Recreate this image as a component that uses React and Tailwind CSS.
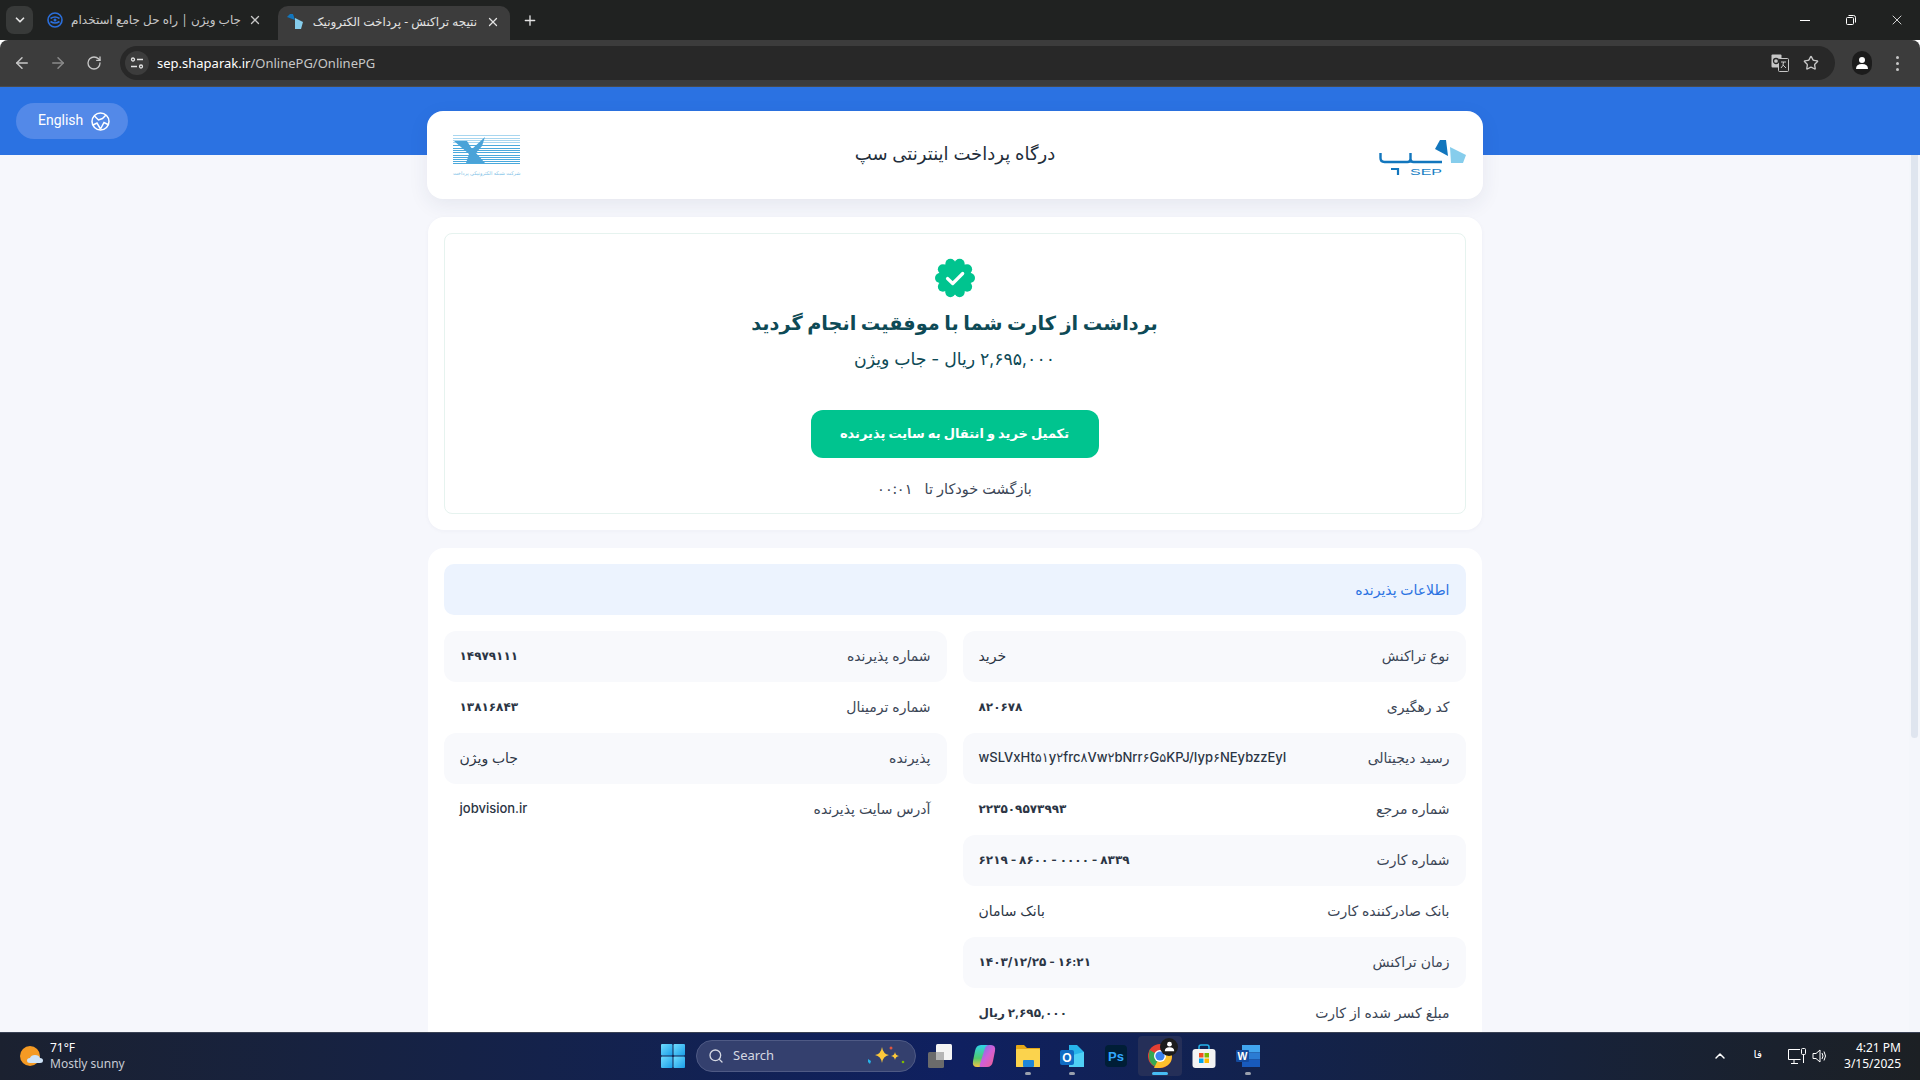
// App.jsx
// Saman (SEP) payment result page inside a Chrome window with the Windows 11 taskbar.

import { ArrowLeft, ArrowRight, ChevronDown, ChevronUp, Plus, RotateCw, Search, Star, X } from "lucide-react";

// Row shape: [label, value, kind]; kind is "num" for digit values, "ltr" for left-to-right mixed text.
const RIGHT_ROWS = [
  ["نوع تراکنش", "خرید"],
  ["کد رهگیری", "۸۲۰۶۷۸", "num"],
  ["رسید دیجیتالی", "wSLVxHt۵۱y۲frc۸Vw۲bNrr۶G۵KPJ/Iyp۶NEybzzEyI", "ltr"],
  ["شماره مرجع", "۲۲۳۵۰۹۵۷۳۹۹۳", "num"],
  ["شماره کارت", "۶۲۱۹ - ۸۶۰۰ - ۰۰۰۰ - ۸۳۳۹", "num"],
  ["بانک صادرکننده کارت", "بانک سامان"],
  ["زمان تراکنش", "۱۴۰۳/۱۲/۲۵ - ۱۶:۲۱", "num"],
  ["مبلغ کسر شده از کارت", "۲,۶۹۵,۰۰۰ ریال", "amount"],
];

const LEFT_ROWS = [
  ["شماره پذیرنده", "۱۴۹۷۹۱۱۱", "num"],
  ["شماره ترمینال", "۱۳۸۱۶۸۴۳", "num"],
  ["پذیرنده", "جاب ویژن"],
  ["آدرس سایت پذیرنده", "jobvision.ir", "ltr"],
];

const VALUE_CLASS = {
  num: "text-[12px] font-bold",
  ltr: "text-[13px] font-medium",
  amount: "text-[12px] font-bold",
};

function InfoRows({ rows }) {
  return (
    <div className="flex flex-col">
      {rows.map(([label, value, kind], i) => (
        <div
          key={label}
          className={`flex h-[51px] shrink-0 items-center justify-between rounded-xl px-4 pb-[2px] text-[14px] ${
            i % 2 === 0 ? "bg-[#f8f9fc]" : "bg-white"
          }`}
        >
          <span className="text-[#3b4656]">{label}</span>
          <span
            dir={kind === "amount" || !kind ? undefined : "ltr"}
            className={`text-[#2b3544] ${VALUE_CLASS[kind] || "font-medium"}`}
          >
            {value}
          </span>
        </div>
      ))}
    </div>
  );
}

function SepLogo() {
  return (
    <svg className="mt-[5px]" width="88" height="36" viewBox="0 0 88 36">
      <path d="M1.500 13v5q0 4 4 4h23q3 0 3-3v-6M31.500 19q0 3 3 3h28.500" fill="none" stroke="#1276bd" strokeWidth="2.400" />
      <path d="M12 29h7v6" fill="none" stroke="#1276bd" strokeWidth="2.200" />
      <path d="M56 9l5-9h6l2 16z" fill="#1276bd" />
      <path d="M71 7l16 8-3 8H72z" fill="#86cdec" />
      <text
        x="31"
        y="34.500"
        direction="ltr"
        textLength="32"
        lengthAdjust="spacingAndGlyphs"
        fontFamily="Liberation Sans, sans-serif"
        fontSize="9"
        fill="#1a7fc4"
      >
        SEP
      </text>
    </svg>
  );
}

function BankLogo() {
  const lines = [0, 3, 5, 7, 10, 13, 15, 17, 20, 22, 24, 26, 28];
  return (
    <div className="mt-[3px] flex w-[67px] flex-col items-stretch">
      <svg width="67" height="31" viewBox="0 0 67 31">
        {lines.map((y, i) => (
          <rect key={y} x="0" y={y} width="67" height="1" fill={i < 4 ? "#a8d6ef" : "#4aa9dc"} />
        ))}
        <path d="M1 6h13l5 8L32 2l-3 9-6 7 9 10H13l3-9z" fill="#4aa3d8" />
      </svg>
      <span className="mt-[2px] text-center text-[5px] leading-[10px] whitespace-nowrap text-[#7cc0e6]" dir="rtl">
        شرکت شبکه الکترونیکی پرداخت
      </span>
    </div>
  );
}

function SuccessBadge() {
  const lobes = [0, 36, 72, 108, 144, 180, 216, 252, 288, 324];
  return (
    <svg width="40" height="40" viewBox="0 0 40 40">
      {lobes.map((a) => (
        <circle
          key={a}
          cx={20 + 15 * Math.cos((a * Math.PI) / 180)}
          cy={20 + 15 * Math.sin((a * Math.PI) / 180)}
          r="5"
          fill="#00c48f"
        />
      ))}
      <circle cx="20" cy="20" r="16.500" fill="#00c48f" />
      <path d="M12.500 20.500l5.200 5 10-10" fill="none" stroke="white" strokeWidth="3.200" strokeLinecap="round" strokeLinejoin="round" />
    </svg>
  );
}

function LangIcon() {
  return (
    <svg width="19" height="19" viewBox="0 0 19 19" fill="none" stroke="white" strokeWidth="1.500">
      <circle cx="9.500" cy="9.500" r="8.500" />
      <path d="M3.500 4l4 4 4-1.500L15 3M2 13l4-2 3.500 6M17 12.500l-4-2-3.500 6.500" />
    </svg>
  );
}

function JobVisionFavicon() {
  return (
    <svg width="16" height="16" viewBox="0 0 16 16" fill="none" stroke="#2b6fdc" strokeWidth="1.600">
      <circle cx="8" cy="8" r="7" />
      <path d="M3.500 6.500q4.500-3 9 0M3.500 9.500q4.500 3 9 0" />
      <circle cx="8" cy="8" r="1.500" fill="#2b6fdc" stroke="none" />
    </svg>
  );
}

function SepFavicon() {
  return (
    <svg width="16" height="16" viewBox="0 0 16 16">
      <path d="M0 3l3-3h3l2 6z" fill="#1276bd" />
      <path d="M8 4l8 4-2 7H8z" fill="#86cdec" />
    </svg>
  );
}

function ChromeTabs() {
  return (
    <div className="flex h-10 shrink-0 items-end bg-[#202221] pl-[6px] text-[12px] font-[Noto_Sans,'DejaVu_Sans',sans-serif]">
      <div className="mb-[6px] flex h-7 w-[27px] items-center justify-center rounded-lg bg-[#383a39]">
        <ChevronDown size={14} strokeWidth={3} className="text-[#e3e3e3]" />
      </div>
      <div className="mb-[6px] flex h-7 w-[245px] items-center pl-[14px]">
        <JobVisionFavicon />
        <span dir="rtl" className="ml-[6px] w-[172px] text-right whitespace-nowrap text-[#c7c7c7]">
          جاب ویژن | راه حل جامع استخدام
        </span>
        <X size={14} strokeWidth={2.200} className="ml-[7px] text-[#c7c7c7]" />
      </div>
      <div className="flex h-[34px] w-[232px] items-center rounded-t-[10px] bg-[#3c3c3c] pb-[2px] pl-[9px]">
        <SepFavicon />
        <span dir="rtl" className="ml-[5px] w-[169px] text-right whitespace-nowrap text-[#e3e3e3]">
          نتیجه تراکنش - پرداخت الکترونیک
        </span>
        <X size={14} strokeWidth={2.200} className="ml-[9px] text-[#e3e3e3]" />
      </div>
      <div className="mb-[6px] ml-[12px] flex h-7 w-[16px] items-center justify-center">
        <Plus size={17} className="text-[#e3e3e3]" />
      </div>
      <div className="mb-[6px] ml-auto flex h-7 items-center text-white">
        <div className="flex w-[46px] justify-center">
          <div className="h-px w-[10px] bg-white" />
        </div>
        <div className="flex w-[46px] justify-center">
          <svg width="10" height="10" viewBox="0 0 10 10" fill="none" stroke="white">
            <rect x="0.500" y="2.500" width="7" height="7" rx="1" />
            <path d="M2.500 0.500h5q2 0 2 2v5" />
          </svg>
        </div>
        <div className="flex w-[46px] justify-center">
          <X size={16} strokeWidth={1.200} />
        </div>
      </div>
    </div>
  );
}

function ChromeToolbar() {
  return (
    <div className="flex h-[47px] shrink-0 items-center rounded-t-[8px] border-b border-[#4a4a4a] bg-[#3c3c3c] pl-[12px] text-[#c7c7c7]">
      <div className="flex w-[108px] items-center">
        <ArrowLeft size={18} className="ml-px" />
        <ArrowRight size={18} className="ml-[18px] text-[#8a8a8a]" />
        <RotateCw size={16} className="ml-[19px]" />
      </div>
      <div className="flex h-[34px] w-[1715px] items-center rounded-full bg-[#282828] pl-[5px]">
        <div className="flex h-6 w-6 items-center justify-center rounded-full bg-[#3c3c3c]">
          <svg width="14" height="14" viewBox="0 0 14 14" fill="none" stroke="#e3e3e3" strokeWidth="1.300">
            <circle cx="3" cy="3.500" r="1.500" />
            <path d="M7 3.500h6M1 10.500h6" />
            <circle cx="11" cy="10.500" r="1.500" />
          </svg>
        </div>
        <span className="ml-[8px] pt-px font-[Noto_Sans,sans-serif] text-[13px] text-[#c7c7c7]">
          <span className="text-white">sep.shaparak.ir</span>/OnlinePG/OnlinePG
        </span>
        <div className="ml-auto flex items-center pr-[16px]">
          <svg width="18" height="18" viewBox="0 0 18 18">
            <rect x="0.500" y="0.500" width="10" height="13" rx="1" fill="#c7c7c7" />
            <rect x="7.500" y="4.500" width="10" height="13" rx="1" fill="#282828" stroke="#c7c7c7" />
            <path d="M10 8h5M12.500 8q0 4-2.500 6M12 11l3 3" stroke="#c7c7c7" fill="none" />
            <circle cx="5" cy="7" r="2.500" fill="none" stroke="#282828" strokeWidth="1.300" />
          </svg>
          <Star size={16} className="ml-[14px]" />
        </div>
      </div>
      <div className="ml-[17px] flex h-6 w-[20px] items-center justify-center rounded-full bg-[#1c1c1c]">
        <svg width="14" height="14" viewBox="0 0 14 14" fill="white">
          <circle cx="7" cy="4" r="3" />
          <path d="M1 13q0-5 6-5t6 5z" />
        </svg>
      </div>
      <div className="ml-[24px] flex flex-col gap-[3px]">
        <div className="h-[3px] w-[3px] rounded-full bg-[#c7c7c7]" />
        <div className="h-[3px] w-[3px] rounded-full bg-[#c7c7c7]" />
        <div className="h-[3px] w-[3px] rounded-full bg-[#c7c7c7]" />
      </div>
    </div>
  );
}

function Scrollbar() {
  return (
    <div className="flex w-[11px] shrink-0 flex-col items-center bg-[#f4f6fb] pt-[3px]">
      <div className="h-0 w-0 border-x-[4px] border-b-[5px] border-x-transparent border-b-[#d5dbe6]" />
      <div className="mt-[3px] h-[640px] w-[7px] rounded-full bg-[#dfe5ef]" />
    </div>
  );
}

function ResultPage() {
  return (
    <div className="relative flex min-h-0 flex-1 overflow-hidden bg-[#f6f7fc]">
      <div className="absolute inset-x-0 top-0 h-[68px] bg-[#2b72e2]" />
      <div className="absolute left-[16px] top-[16px] flex h-9 w-[112px] items-center gap-[8px] rounded-full bg-[#5389e8] pl-[22px] font-[Roboto,sans-serif] text-[14px] text-white">
        <span className="pb-[2px]">English</span>
        <LangIcon />
      </div>
      <div dir="rtl" className="relative mx-auto w-[1056px] shrink-0 pt-[24px]">
        <header className="flex h-[88px] items-center rounded-2xl bg-white px-4 shadow-[0_6px_20px_rgba(40,50,90,0.08)]">
          <div className="flex flex-1 justify-start">
            <SepLogo />
          </div>
          <h1 className="mr-[10px] pb-[3px] text-[18px] font-medium text-[#222d3a]">درگاه پرداخت اینترنتی سپ</h1>
          <div className="flex flex-1 justify-end pl-[11px]">
            <BankLogo />
          </div>
        </header>

        <section className="mx-px mt-[18px] rounded-2xl bg-white p-4 shadow-[0_1px_4px_rgba(40,50,90,0.04)]">
          <div className="flex h-[281px] flex-col items-center rounded-lg border border-[#e6f3ef] pt-[24px]">
            <SuccessBadge />
            <h2 className="mt-[9px] text-[19.300px] leading-8 font-bold text-[#0e4a56]">
              برداشت از کارت شما با موفقیت انجام گردید
            </h2>
            <p className="mt-[6px] text-[17.300px] leading-7 text-[#0e4a56]">۲,۶۹۵,۰۰۰ ریال - جاب ویژن</p>
            <button className="mt-[37px] h-12 w-[288px] rounded-xl bg-[#00c48f] text-[13px] font-bold text-white">
              تکمیل خرید و انتقال به سایت پذیرنده
            </button>
            <p className="mt-[21px] text-[14.500px] leading-5 text-[#3b4656]">
              بازگشت خودکار تا <span className="mr-2 tracking-[2px]">۰۰:۰۱</span>
            </p>
          </div>
        </section>

        <section className="mx-px mt-[18px] rounded-2xl bg-white p-4">
          <div className="flex h-[51px] items-center rounded-[10px] bg-[#ecf3fe] px-4 pb-px text-[14px] font-medium text-[#2b72e2]">
            اطلاعات پذیرنده
          </div>
          <div className="mt-4 grid grid-cols-2 gap-x-4">
            <InfoRows rows={RIGHT_ROWS} />
            <InfoRows rows={LEFT_ROWS} />
          </div>
        </section>
      </div>
      <Scrollbar />
    </div>
  );
}

function WinLogo() {
  return (
    <svg width="24" height="24" viewBox="0 0 24 24">
      <defs>
        <linearGradient id="win" x1="0" y1="0" x2="1" y2="1">
          <stop offset="0" stopColor="#6fdcff" />
          <stop offset="1" stopColor="#1a9ee8" />
        </linearGradient>
      </defs>
      <rect x="0" y="0" width="11.500" height="11.500" rx="1" fill="url(#win)" />
      <rect x="12.500" y="0" width="11.500" height="11.500" rx="1" fill="url(#win)" />
      <rect x="0" y="12.500" width="11.500" height="11.500" rx="1" fill="url(#win)" />
      <rect x="12.500" y="12.500" width="11.500" height="11.500" rx="1" fill="url(#win)" />
    </svg>
  );
}

function TaskView() {
  return (
    <svg width="24" height="24" viewBox="0 0 24 24">
      <rect x="8" y="0" width="16" height="16" rx="1.500" fill="#f4f4f4" />
      <rect x="0" y="8" width="16" height="16" rx="1.500" fill="#6b6b6b" />
      <rect x="8" y="8" width="8" height="8" fill="#b5b5b5" />
    </svg>
  );
}

function Copilot() {
  return (
    <svg width="24" height="24" viewBox="0 0 24 24">
      <defs>
        <linearGradient id="cpA" x1="0" y1="0" x2="0" y2="1">
          <stop offset="0" stopColor="#2fd3e8" />
          <stop offset="0.600" stopColor="#4fc96f" />
          <stop offset="1" stopColor="#f6c344" />
        </linearGradient>
        <linearGradient id="cpB" x1="0" y1="0" x2="1" y2="1">
          <stop offset="0" stopColor="#5a7cf0" />
          <stop offset="0.500" stopColor="#d05fd8" />
          <stop offset="1" stopColor="#f0608a" />
        </linearGradient>
      </defs>
      <path d="M9 1h6q2 0 1 3L11 20q-1 3-4 3H5q-5 0-4-6l2-10q1-6 6-6z" fill="url(#cpA)" />
      <path d="M15 23H9q-2 0-1-3l5-16q1-3 4-3h2q5 0 4 6l-2 10q-1 6-6 6z" fill="url(#cpB)" />
    </svg>
  );
}

function FilesIcon() {
  return (
    <svg width="24" height="24" viewBox="0 0 24 24">
      <path d="M0 2q0-1 1-1h7l3 3h13v19H0z" fill="#e6a817" />
      <rect x="0" y="5" width="24" height="18" rx="1" fill="#fbd34d" />
      <rect x="7" y="16" width="11" height="7" rx="1" fill="#1f86d8" />
    </svg>
  );
}

function OutlookIcon() {
  return (
    <svg width="24" height="24" viewBox="0 0 24 24">
      <path d="M9 1h8l7 7v15H9z" fill="#27b3ea" />
      <path d="M9 12l15-4v15H9z" fill="#4fd0f5" />
      <rect x="0" y="6" width="14" height="15" rx="2" fill="#0f6cc4" />
      <text x="7" y="18" textAnchor="middle" fontFamily="Liberation Sans, sans-serif" fontSize="12" fontWeight="700" fill="white">
        O
      </text>
    </svg>
  );
}

function PsIcon() {
  return (
    <svg width="22" height="22" viewBox="0 0 22 22">
      <rect width="22" height="22" rx="4" fill="#001e36" />
      <text x="11" y="16" textAnchor="middle" fontFamily="Liberation Sans, sans-serif" fontSize="13" fontWeight="700" fill="#31a8ff">
        Ps
      </text>
    </svg>
  );
}

function ChromeIcon() {
  return (
    <div className="relative">
      <svg width="24" height="24" viewBox="0 0 24 24">
        <circle cx="12" cy="12" r="12" fill="#e53f33" />
        <path d="M12 12L1.600 6 1 12q0 8 7 11l4-1z" fill="#35a853" />
        <path d="M12 12l10.400-6q1.600 3 1.600 6 0 10-12 12l-6 0z" fill="#fbc02d" />
        <circle cx="12" cy="12" r="6" fill="white" />
        <circle cx="12" cy="12" r="4.600" fill="#3b82f0" />
      </svg>
      <div className="absolute -right-[6px] -top-[6px] flex h-[18px] w-[18px] items-center justify-center rounded-full bg-[#1c1c1c]">
        <svg width="11" height="11" viewBox="0 0 14 14" fill="white">
          <circle cx="7" cy="4" r="3" />
          <path d="M1 13q0-5 6-5t6 5z" />
        </svg>
      </div>
    </div>
  );
}

function StoreIcon() {
  return (
    <svg width="24" height="24" viewBox="0 0 24 24">
      <path d="M7 6V3q0-2 2-2h6q2 0 2 2v3" fill="none" stroke="#27b3ea" strokeWidth="1.500" />
      <rect x="0.500" y="5" width="23" height="19" rx="3" fill="#f3f3f3" />
      <rect x="7" y="9" width="4.500" height="4.500" fill="#f25022" />
      <rect x="12.500" y="9" width="4.500" height="4.500" fill="#7fba00" />
      <rect x="7" y="14.500" width="4.500" height="4.500" fill="#00a4ef" />
      <rect x="12.500" y="14.500" width="4.500" height="4.500" fill="#ffb900" />
    </svg>
  );
}

function WordIcon() {
  return (
    <svg width="24" height="24" viewBox="0 0 24 24">
      <rect x="6" y="1" width="18" height="7.300" fill="#41a5ee" />
      <rect x="6" y="8.300" width="18" height="7.300" fill="#2b7cd3" />
      <rect x="6" y="15.600" width="18" height="7.400" fill="#185abd" />
      <rect x="0" y="6" width="13" height="12" rx="1" fill="#134a9e" />
      <text x="6.500" y="16" textAnchor="middle" fontFamily="Liberation Sans, sans-serif" fontSize="10.500" fontWeight="700" fill="white">
        W
      </text>
    </svg>
  );
}

function TaskbarSlot({ children, dot, active }) {
  return (
    <div className={`relative flex h-10 w-[44px] items-center justify-center ${active ? "rounded bg-[#252f58]" : ""}`}>
      {children}
      {dot && <div className="absolute bottom-[1px] h-[3px] w-[6px] rounded-full bg-[#9aa0ad]" />}
      {active && <div className="absolute bottom-[1px] h-[3px] w-[16px] rounded-full bg-[#47bdf5]" />}
    </div>
  );
}

function Taskbar() {
  return (
    <div className="flex h-[48px] shrink-0 items-center border-t border-[#3a4255] bg-gradient-to-r from-[#1b2130] via-[#0f2060] to-[#1c2024] pb-[2px] text-white font-[Noto_Sans,sans-serif]">
      {/* Weather */}
      <div className="flex w-[651px] items-center pl-[20px]">
        <svg width="24" height="20" viewBox="0 0 24 20">
          <circle cx="10" cy="10" r="10" fill="#f59a23" />
          <path d="M10 17q-3 0-3-2.500t3-2.500q1-3 5-3t5 3q3 0 3 2.500T20 17z" fill="#cfe3f7" />
        </svg>
        <div className="ml-[6px] text-[12px] leading-[16px]">
          <div>71°F</div>
          <div className="text-[#c8ccd4]">Mostly sunny</div>
        </div>
      </div>
      {/* Pinned apps */}
      <TaskbarSlot>
        <WinLogo />
      </TaskbarSlot>
      <div className="ml-px flex h-8 w-[220px] items-center rounded-full border border-[#4f5a85] bg-[#34406e] pl-[11px] text-[13px] text-[#d5d8e2]">
        <Search size={16} />
        <span className="ml-[9px]">Search</span>
        <svg className="ml-auto mr-[9px]" width="40" height="22" viewBox="0 0 40 22">
          <path d="M16 2q1 7 7 8-6 1-7 8-1-7-7-8 6-1 7-8z" fill="#fcc83a" />
          <path d="M29 7q.5 3.500 4 4-3.500.5-4 4-.5-3.500-4-4 3.500-.5 4-4z" fill="#fcc83a" />
          <circle cx="25" cy="3" r="1.500" fill="#e0553f" />
          <circle cx="37" cy="17" r="1.300" fill="#7fba00" />
          <path d="M2 14l3 2-1 3-2-2z" fill="#27b3ea" />
        </svg>
      </div>
      <div className="ml-[2px] flex items-center">
        <TaskbarSlot>
          <TaskView />
        </TaskbarSlot>
        <TaskbarSlot>
          <Copilot />
        </TaskbarSlot>
        <TaskbarSlot dot>
          <FilesIcon />
        </TaskbarSlot>
        <TaskbarSlot dot>
          <OutlookIcon />
        </TaskbarSlot>
        <TaskbarSlot>
          <PsIcon />
        </TaskbarSlot>
        <TaskbarSlot active>
          <ChromeIcon />
        </TaskbarSlot>
        <TaskbarSlot>
          <StoreIcon />
        </TaskbarSlot>
        <TaskbarSlot dot>
          <WordIcon />
        </TaskbarSlot>
      </div>
      {/* Tray */}
      <div className="ml-auto flex items-center pr-[19px]">
        <ChevronUp size={16} strokeWidth={2.200} />
        <span className="ml-[25px] font-['DejaVu_Sans',sans-serif] text-[11px]">فا</span>
        <svg className="ml-[26px]" width="18" height="16" viewBox="0 0 18 16" fill="none" stroke="white">
          <path d="M12 1.500H.5v10h12M6 12v3M3 15.500h7" />
          <rect x="13.500" y="0.500" width="4" height="6" rx="1" />
          <path d="M15.500 7v8" />
        </svg>
        <svg className="ml-[6px]" width="16" height="16" viewBox="0 0 16 16" fill="none" stroke="white">
          <path d="M1 5.500h3L8 2v12l-4-3.500H1z" />
          <path d="M10 5q2 3 0 6M12 3.500q3 4.500 0 9" />
        </svg>
        <div className="ml-[16px] text-right text-[12px] leading-[16px]">
          <div>4:21 PM</div>
          <div>3/15/2025</div>
        </div>
      </div>
    </div>
  );
}

export default function App() {
  return (
    <div className="flex h-screen w-full flex-col overflow-hidden font-[Inter,'DejaVu_Sans',sans-serif]">
      <ChromeTabs />
      <ChromeToolbar />
      <ResultPage />
      <Taskbar />
    </div>
  );
}
